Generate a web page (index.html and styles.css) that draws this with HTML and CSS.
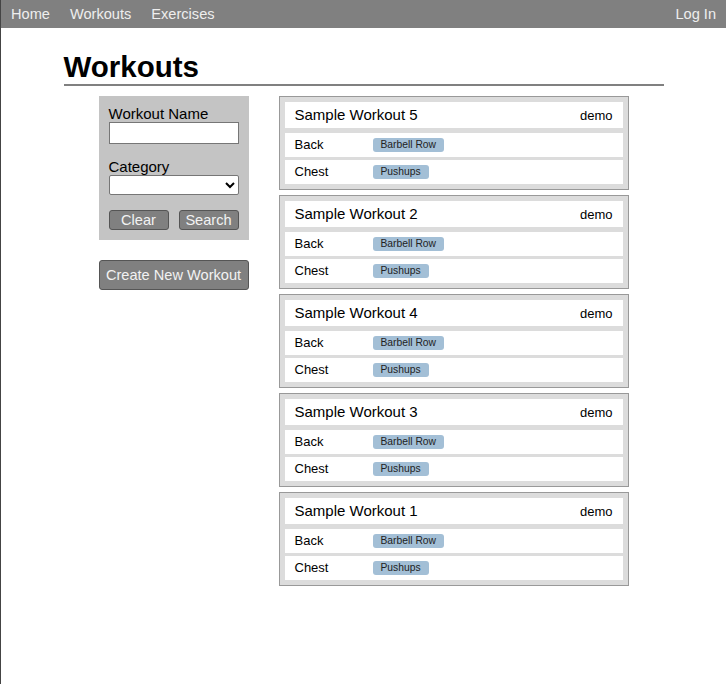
FILE: index.html
```html
<!DOCTYPE html>
<html>
<head>
<meta charset="utf-8">
<title>Workouts</title>
<link rel="stylesheet" href="styles.css">
</head>
<body>
<nav class="topnav">
  <div class="nav-left">
    <a class="nav-link" href="#">Home</a>
    <a class="nav-link" href="#">Workouts</a>
    <a class="nav-link" href="#">Exercises</a>
  </div>
  <a class="nav-link" href="#">Log In</a>
</nav>
<main class="container">
  <h1 class="page-title">Workouts</h1>
  <div class="layout">
    <aside class="sidebar">
      <form class="filter">
        <label class="field-label">Workout Name</label>
        <input class="text-input" type="text">
        <label class="field-label cat-label">Category</label>
        <select class="select-input"><option></option></select>
        <div class="filter-buttons">
          <button type="button" class="btn small">Clear</button>
          <button type="button" class="btn small">Search</button>
        </div>
      </form>
      <button type="button" class="btn create">Create New Workout</button>
    </aside>
    <section class="cards">
      <div class="card">
        <div class="card-head"><span class="card-title">Sample Workout 5</span><span class="card-user">demo</span></div>
        <div class="card-row"><span class="row-label">Back</span><span class="badge">Barbell Row</span></div>
        <div class="card-row"><span class="row-label">Chest</span><span class="badge">Pushups</span></div>
      </div>
      <div class="card">
        <div class="card-head"><span class="card-title">Sample Workout 2</span><span class="card-user">demo</span></div>
        <div class="card-row"><span class="row-label">Back</span><span class="badge">Barbell Row</span></div>
        <div class="card-row"><span class="row-label">Chest</span><span class="badge">Pushups</span></div>
      </div>
      <div class="card">
        <div class="card-head"><span class="card-title">Sample Workout 4</span><span class="card-user">demo</span></div>
        <div class="card-row"><span class="row-label">Back</span><span class="badge">Barbell Row</span></div>
        <div class="card-row"><span class="row-label">Chest</span><span class="badge">Pushups</span></div>
      </div>
      <div class="card">
        <div class="card-head"><span class="card-title">Sample Workout 3</span><span class="card-user">demo</span></div>
        <div class="card-row"><span class="row-label">Back</span><span class="badge">Barbell Row</span></div>
        <div class="card-row"><span class="row-label">Chest</span><span class="badge">Pushups</span></div>
      </div>
      <div class="card">
        <div class="card-head"><span class="card-title">Sample Workout 1</span><span class="card-user">demo</span></div>
        <div class="card-row"><span class="row-label">Back</span><span class="badge">Barbell Row</span></div>
        <div class="card-row"><span class="row-label">Chest</span><span class="badge">Pushups</span></div>
      </div>
    </section>
  </div>
</main>
</body>
</html>
```

FILE: styles.css
```css
html, body {
  margin: 0;
  padding: 0;
}
body {
  font-family: "Liberation Sans", Arial, sans-serif;
  color: #000;
  background: #fff;
  border-left: 1px solid #444;
  min-height: 100vh;
  box-sizing: border-box;
}
.topnav {
  display: flex;
  justify-content: space-between;
  background: #808080;
  height: 28px;
}
.nav-left {
  display: flex;
}
.nav-link {
  display: block;
  padding: 0 10px;
  line-height: 28px;
  font-size: 14.6px;
  color: #eee;
  text-decoration: none;
}
.container {
  width: 600px;
  margin: 0 auto;
}
.page-title {
  margin: 22px 0 10px;
  font-size: 29.5px;
  line-height: 34px;
  font-weight: bold;
  border-bottom: 2px solid #808080;
}
.layout {
  display: flex;
  justify-content: center;
  gap: 30px;
}
.sidebar {
  width: 150px;
  display: flex;
  flex-direction: column;
}
.filter {
  background: #c4c4c4;
  padding: 10px;
  display: flex;
  flex-direction: column;
}
.field-label {
  font-size: 15px;
  line-height: 16px;
}
.cat-label {
  margin-top: 14px;
  line-height: 17px;
}
.text-input {
  box-sizing: border-box;
  width: 130px;
  height: 22px;
  margin: 0;
  border: 1px solid #767676;
  background: #fff;
  padding: 1px 2px;
}
.select-input {
  box-sizing: border-box;
  width: 130px;
  height: 20px;
  margin: 0;
  border: 1px solid #767676;
  border-radius: 2px;
  background: #fff;
  font-size: 13px;
}
.filter-buttons {
  display: flex;
  justify-content: space-between;
  margin-top: 15px;
}
.btn {
  font-family: "Liberation Sans", Arial, sans-serif;
  background: #808080;
  color: #f2f2f2;
  border: 1px solid #555;
  border-radius: 3px;
  font-size: 14.6px;
  margin: 0;
  padding: 0;
  box-sizing: border-box;
}
.btn.small {
  width: 60px;
  height: 20px;
  line-height: 18px;
}
.btn.create {
  margin-top: 20px;
  width: 150px;
  height: 30px;
}
.cards {
  width: 350px;
  display: flex;
  flex-direction: column;
  gap: 5px;
}
.card {
  box-sizing: border-box;
  background: #dcdcdc;
  border: 1px solid #999;
  padding: 5px;
  display: flex;
  flex-direction: column;
  gap: 3px;
}
.card-head {
  background: #fff;
  height: 26px;
  display: flex;
  justify-content: space-between;
  align-items: center;
  padding: 0 10px;
  margin-bottom: 2px;
}
.card-title {
  font-size: 15px;
  line-height: 18px;
}
.card-user {
  font-size: 13px;
}
.card-row {
  background: #fff;
  height: 24px;
  display: flex;
  align-items: center;
  padding: 0 10px;
}
.row-label {
  width: 78px;
  font-size: 13px;
  line-height: 15px;
  margin-top: -1px;
}
.badge {
  background: #a3bfd6;
  color: #222;
  font-size: 10.3px;
  line-height: 14px;
  padding: 0 8px;
  border-radius: 3px;
}
```
